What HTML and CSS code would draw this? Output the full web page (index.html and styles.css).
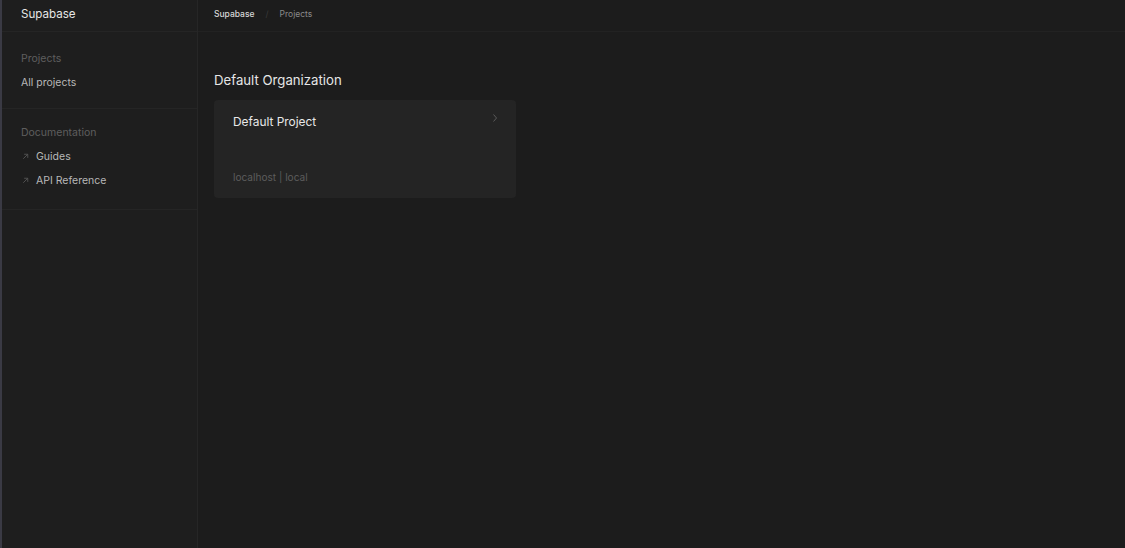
FILE: index.html
```html
<!DOCTYPE html>
<html lang="en">
<head>
  <meta charset="UTF-8">
  <title>Supabase</title>
  <link rel="stylesheet" href="styles.css">
</head>
<body>
  <div class="app">
    <aside class="sidebar">
      <div class="sidebar-header">Supabase</div>
      <nav class="sidebar-section">
        <div class="section-title">Projects</div>
        <a class="nav-item">All projects</a>
      </nav>
      <nav class="sidebar-section docs">
        <div class="section-title">Documentation</div>
        <a class="nav-item ext">
          <svg class="ext-icon" viewBox="0 0 10 10"><path d="M2.5 7.5 L7.5 2.5 M3.5 2.5 H7.5 V6.5" /></svg>
          Guides
        </a>
        <a class="nav-item ext">
          <svg class="ext-icon" viewBox="0 0 10 10"><path d="M2.5 7.5 L7.5 2.5 M3.5 2.5 H7.5 V6.5" /></svg>
          API Reference
        </a>
      </nav>
    </aside>

    <main class="main">
      <div class="topbar">
        <span class="crumb current">Supabase</span>
        <span class="crumb-sep">/</span>
        <span class="crumb">Projects</span>
      </div>
      <div class="content">
        <h2 class="org-title">Default Organization</h2>
        <div class="project-grid">
          <div class="project-card">
            <div class="project-top">
              <span class="project-name">Default Project</span>
              <svg class="chevron" viewBox="0 0 10 10"><path d="M3.5 1.5 L6.5 5 L3.5 8.5" /></svg>
            </div>
            <div class="project-meta">localhost | local</div>
          </div>
        </div>
      </div>
    </main>
  </div>
</body>
</html>
```

FILE: styles.css
```css
* {
  margin: 0;
  padding: 0;
  box-sizing: border-box;
}

html, body {
  height: 100%;
}

body {
  font-family: Inter, "Open Sans", "Liberation Sans", sans-serif;
  background-color: #1c1c1c;
  color: #ededed;
  -webkit-font-smoothing: antialiased;
}

.app {
  display: flex;
  height: 100%;
  border-left: 2px solid #3a3a44;
}

/* sidebar */
.sidebar {
  width: 196px;
  flex-shrink: 0;
  background-color: #1e1e1e;
  border-right: 1px solid #262626;
}

.sidebar-header {
  height: 32px;
  padding: 0 19px 4px;
  display: flex;
  align-items: center;
  font-size: 11.6px;
  color: #e6e6e6;
  border-bottom: 1px solid #252525;
}

.sidebar-section {
  padding: 18px 19px 17px;
  border-bottom: 1px solid #252525;
  display: flex;
  flex-direction: column;
}

.sidebar-section.docs {
  padding-top: 15px;
  padding-bottom: 20px;
}

.section-title {
  font-size: 10.5px;
  color: #5e5e5e;
  height: 17px;
  line-height: 17px;
  margin-bottom: 7px;
}

.nav-item {
  font-size: 10.5px;
  color: #b8b8b8;
  height: 17px;
  line-height: 17px;
  display: flex;
  align-items: center;
  cursor: pointer;
}

.nav-item.ext {
  margin-bottom: 7px;
}

.nav-item.ext:last-child {
  margin-bottom: 0;
}

.ext-icon {
  width: 9px;
  height: 9px;
  margin-right: 6px;
  fill: none;
  stroke: #555;
  stroke-width: 1;
}

/* main */
.main {
  flex: 1;
  display: flex;
  flex-direction: column;
}

.topbar {
  height: 32px;
  padding: 0 16px 4px;
  display: flex;
  align-items: center;
  gap: 9px;
  border-bottom: 1px solid #222;
  font-size: 8.5px;
}

.crumb {
  color: #8a8a8a;
}

.crumb.current {
  color: #d6d6d6;
  font-weight: 500;
}

.crumb-sep {
  color: #3a3a3a;
  margin: 0 2px;
}

.content {
  padding: 40px 16px;
}

.org-title {
  font-size: 13.2px;
  font-weight: 400;
  color: #e6e6e6;
  margin-bottom: 12px;
}

.project-grid {
  display: grid;
  grid-template-columns: 302px;
}

.project-card {
  background-color: #242424;
  border-radius: 4px;
  height: 98px;
  padding: 14px 18px 15px 19px;
  display: flex;
  flex-direction: column;
  justify-content: space-between;
}

.project-top {
  display: flex;
  justify-content: space-between;
  align-items: flex-start;
}

.project-name {
  font-size: 11.9px;
  color: #e8e8e8;
}

.chevron {
  width: 10px;
  height: 10px;
  fill: none;
  stroke: #5a5a5a;
  stroke-width: 1;
  margin-top: -1px;
  margin-right: -2px;
}

.project-meta {
  font-size: 10.1px;
  color: #5c5c5c;
}
```
